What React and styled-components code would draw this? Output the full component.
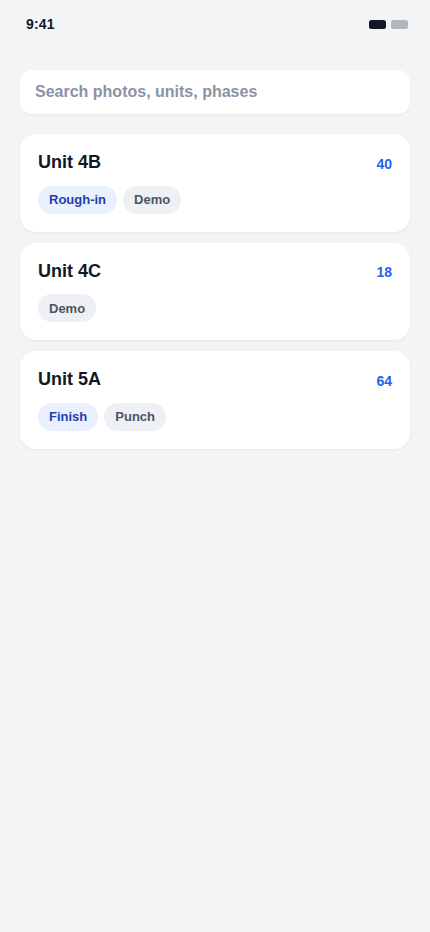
import React from "react";
import styled, { createGlobalStyle } from "styled-components";

const Global = createGlobalStyle`
  * { box-sizing: border-box; }
  html, body { margin: 0; padding: 0; background: #f3f4f6; }
  body { font-family: "Liberation Sans", Arial, sans-serif; -webkit-font-smoothing: antialiased; }
`;

const Screen = styled.div`
  width: 430px;
  min-height: 932px;
  background: #f3f4f6;
  display: flex;
  flex-direction: column;
`;

const StatusBar = styled.div`
  height: 48px;
  padding: 0 22px 0 26px;
  display: flex;
  align-items: center;
  justify-content: space-between;
`;

const Time = styled.span`
  font-size: 14px;
  font-weight: 700;
  color: #111827;
  letter-spacing: 0.2px;
`;

const Indicators = styled.div`
  display: flex;
  gap: 5px;
  align-items: center;
`;

const Pill = styled.span`
  width: 17px;
  height: 9px;
  border-radius: 2.5px;
  background: ${(p) => (p.$muted ? "#b4b6bf" : "#111827")};
`;

const Content = styled.div`
  padding: 22px 20px 20px;
  display: flex;
  flex-direction: column;
`;

const Search = styled.input`
  height: 44px;
  width: 100%;
  border: none;
  outline: none;
  border-radius: 12px;
  background: #ffffff;
  padding: 0 15px;
  font-family: inherit;
  font-size: 16px;
  font-weight: 700;
  color: #111827;
  box-shadow: 0 1px 2px rgba(17, 24, 39, 0.05);
  &::placeholder { color: #8b93a6; }
`;

const List = styled.div`
  margin-top: 20px;
  display: flex;
  flex-direction: column;
  gap: 11px;
`;

const Card = styled.div`
  background: #ffffff;
  border-radius: 16px;
  padding: 18px;
  box-shadow: 0 1px 3px rgba(17, 24, 39, 0.06);
  display: flex;
  flex-direction: column;
  gap: 12px;
`;

const CardHead = styled.div`
  display: flex;
  justify-content: space-between;
  align-items: center;
  height: 21.5px;
`;

const Title = styled.span`
  font-size: 18px;
  font-weight: 700;
  color: #111827;
`;

const Count = styled.span`
  font-size: 14px;
  font-weight: 700;
  color: #2563eb;
  margin-top: 2px;
`;

const Chips = styled.div`
  display: flex;
  gap: 6px;
`;

const Chip = styled.span`
  height: 28px;
  padding: 0 11px;
  border-radius: 14px;
  display: inline-flex;
  align-items: center;
  font-size: 13px;
  font-weight: 700;
  background: ${(p) => (p.$active ? "#eaf0fd" : "#eef0f5")};
  color: ${(p) => (p.$active ? "#1e40af" : "#4b5563")};
`;

const units = [
  { name: "Unit 4B", count: 40, tags: [["Rough-in", true], ["Demo", false]] },
  { name: "Unit 4C", count: 18, tags: [["Demo", false]] },
  { name: "Unit 5A", count: 64, tags: [["Finish", true], ["Punch", false]] },
];

export default function App() {
  return (
    <>
      <Global />
      <Screen>
        <StatusBar>
          <Time>9:41</Time>
          <Indicators>
            <Pill />
            <Pill $muted />
          </Indicators>
        </StatusBar>
        <Content>
          <Search placeholder="Search photos, units, phases" />
          <List>
            {units.map((u) => (
              <Card key={u.name}>
                <CardHead>
                  <Title>{u.name}</Title>
                  <Count>{u.count}</Count>
                </CardHead>
                <Chips>
                  {u.tags.map(([t, a]) => (
                    <Chip key={t} $active={a}>{t}</Chip>
                  ))}
                </Chips>
              </Card>
            ))}
          </List>
        </Content>
      </Screen>
    </>
  );
}
